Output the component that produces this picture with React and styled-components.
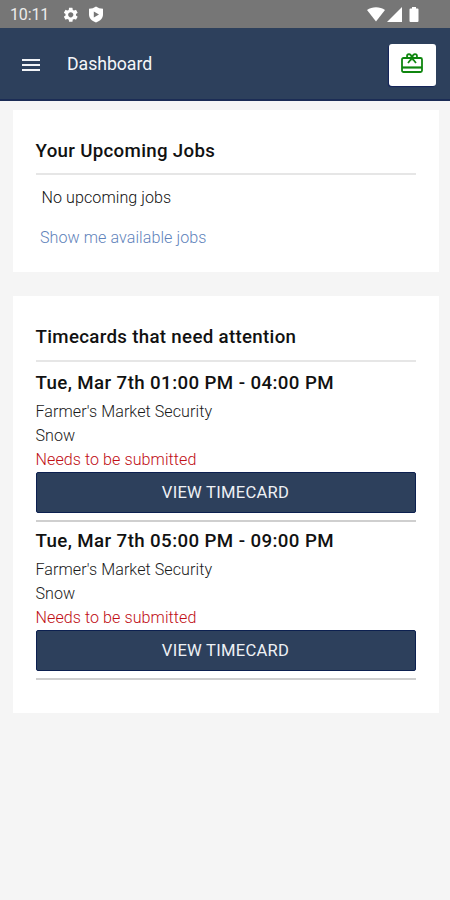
import React from 'react';
import styled, { createGlobalStyle } from 'styled-components';
import { MdMenu, MdSettings } from 'react-icons/md';

const GlobalStyle = createGlobalStyle`
  * {
    box-sizing: border-box;
  }

  body {
    margin: 0;
    background: #f5f5f5;
    font-family: Roboto, sans-serif;
  }
`;

const StatusBar = styled.div`
  display: flex;
  align-items: center;
  height: 28px;
  padding: 1px 30px 0 10px;
  background: #767676;
  color: #ececec;
`;

const Clock = styled.span`
  width: 51.5px;
  font-size: 16px;
  letter-spacing: -0.15px;
`;

const StatusIcons = styled.div`
  display: flex;
  align-items: center;
  gap: ${(props) => props.$gap}px;
  margin-left: ${(props) => (props.$right ? 'auto' : 0)};
  color: #fff;

  svg {
    display: block;
  }
`;

const Header = styled.header`
  display: flex;
  align-items: center;
  height: 73px;
  padding: 0 14px 0 19px;
  background: #2d405c;
  border-bottom: 2px solid #1b2c55;
  color: #fff;
`;

const MenuButton = styled.button`
  display: flex;
  margin: 2px 24px 0 0;
  padding: 0;
  border: 0;
  background: none;
  color: #f2f4f7;
`;

const PageTitle = styled.h1`
  margin: 0;
  font-size: 17.7px;
  font-weight: 400;
  letter-spacing: -0.05px;
  color: #f4f6f9;
`;

const GiftButton = styled.button`
  display: flex;
  align-items: center;
  justify-content: center;
  width: 47px;
  height: 42px;
  margin: 2px 0 0 auto;
  padding: 0 2px 4px 0;
  border: 0;
  border-radius: 3px;
  background: #fff;
  box-shadow: -1px 1px 1px #14245a;
  color: #0f860f;
`;

const Content = styled.main`
  display: grid;
  row-gap: 24px;
  padding: 9px 11px 0 12.5px;
`;

const Card = styled.section`
  height: ${(props) => props.$height}px;
  padding: 0 23.5px 0 23px;
  background: #fff;
`;

const CardTitle = styled.h2`
  height: ${(props) => props.$height}px;
  margin: 0;
  padding-top: 28px;
  border-bottom: 2px solid #e6e6e6;
  font-size: 18.7px;
  font-weight: 500;
  line-height: 26px;
  letter-spacing: 0.32px;
  color: #111;
`;

const EmptyText = styled.p`
  margin: 10px 0 0 6px;
  font-size: 16.1px;
  font-weight: 300;
  line-height: 26px;
  letter-spacing: 0.06px;
  color: #111;
`;

const JobsLink = styled.a`
  display: block;
  margin: 14px 0 0 4.5px;
  font-size: 16.1px;
  font-weight: 300;
  line-height: 26px;
  letter-spacing: 0.06px;
  color: #5f83bb;
`;

const Timecard = styled.article`
  height: ${(props) => (props.$first ? 160 : 158)}px;
  padding-top: ${(props) => (props.$first ? 8 : 6)}px;
  border-bottom: 2px solid #cfcfcf;
`;

const Shift = styled.h3`
  margin: 0 0 4px;
  font-size: 18.7px;
  font-weight: 500;
  line-height: 26px;
  letter-spacing: 0.4px;
  color: #111;
`;

const Detail = styled.p`
  margin: 0;
  font-size: 16.1px;
  font-weight: 300;
  line-height: 24px;
  letter-spacing: 0.06px;
  color: ${(props) => (props.$alert ? '#c00d14' : '#1a1a1a')};
`;

const TimecardButton = styled.button`
  display: block;
  width: 100%;
  height: 41px;
  padding: 0;
  border: 1px solid #0c2050;
  border-radius: 2px;
  background: #2d405c;
  font-family: inherit;
  font-size: 16.6px;
  letter-spacing: 0.25px;
  color: #eef1f5;
`;

const timecards = [
  { id: 1, shift: 'Tue, Mar 7th 01:00 PM - 04:00 PM' },
  { id: 2, shift: 'Tue, Mar 7th 05:00 PM - 09:00 PM' },
];

function GiftIcon() {
  return (
    <svg
      width="22"
      height="20"
      viewBox="0 0 22 20"
      fill="none"
      stroke="currentColor"
      strokeWidth="1.8"
    >
      <rect x="1" y="5" width="20" height="14" rx="1.5" />
      <path d="M1 14.5h20" strokeWidth="2.2" />
      <path d="M11 5H8Q6 5 6 3.200T8 1.200Q10 1.200 11 5Q12 1.200 14 1.200T16 3.200T14 5z" />
      <path d="M11 5l-4 5M11 5l4 5" />
    </svg>
  );
}

export default function App() {
  return (
    <>
      <GlobalStyle />
      <StatusBar>
        <Clock>10:11</Clock>
        <StatusIcons $gap={10}>
          <MdSettings size={17.5} />
          <svg width="15" height="17" viewBox="0 0 15 17">
            <path
              fill="currentColor"
              fillRule="evenodd"
              d="M7 0.500Q10 2.800 14 2.800v5.700c0 3.500-2.500 6.500-7 8C2.500 15 0 12 0 8.500V2.800Q4 2.800 7 .5zM4.800 5.500v6l5.200-3z"
            />
          </svg>
        </StatusIcons>
        <StatusIcons $gap={2} $right>
          <svg width="18" height="15" viewBox="0 0 18 15">
            <path fill="currentColor" d="M0 3C5-.7 13-.7 18 3L9 14.500z" />
          </svg>
          <svg width="15" height="15" viewBox="0 0 15 15">
            <path fill="currentColor" d="M15 0v15H0z" />
          </svg>
          <svg width="16" height="15" viewBox="0 0 16 15">
            <path
              fill="currentColor"
              d="M8 0h4v1.500h1.500q1 0 1 1V14q0 1-1 1H6.500q-1 0-1-1V2.500q0-1 1-1H8z"
            />
          </svg>
        </StatusIcons>
      </StatusBar>
      <Header>
        <MenuButton>
          <MdMenu size={24} />
        </MenuButton>
        <PageTitle>Dashboard</PageTitle>
        <GiftButton>
          <GiftIcon />
        </GiftButton>
      </Header>
      <Content>
        <Card $height={162}>
          <CardTitle $height={65}>Your Upcoming Jobs</CardTitle>
          <EmptyText>No upcoming jobs</EmptyText>
          <JobsLink>Show me available jobs</JobsLink>
        </Card>
        <Card $height={417}>
          <CardTitle $height={66}>Timecards that need attention</CardTitle>
          {timecards.map((timecard, index) => (
            <Timecard key={timecard.id} $first={index === 0}>
              <Shift>{timecard.shift}</Shift>
              <Detail>Farmer's Market Security</Detail>
              <Detail>Snow</Detail>
              <Detail $alert>Needs to be submitted</Detail>
              <TimecardButton>VIEW TIMECARD</TimecardButton>
            </Timecard>
          ))}
        </Card>
      </Content>
    </>
  );
}
